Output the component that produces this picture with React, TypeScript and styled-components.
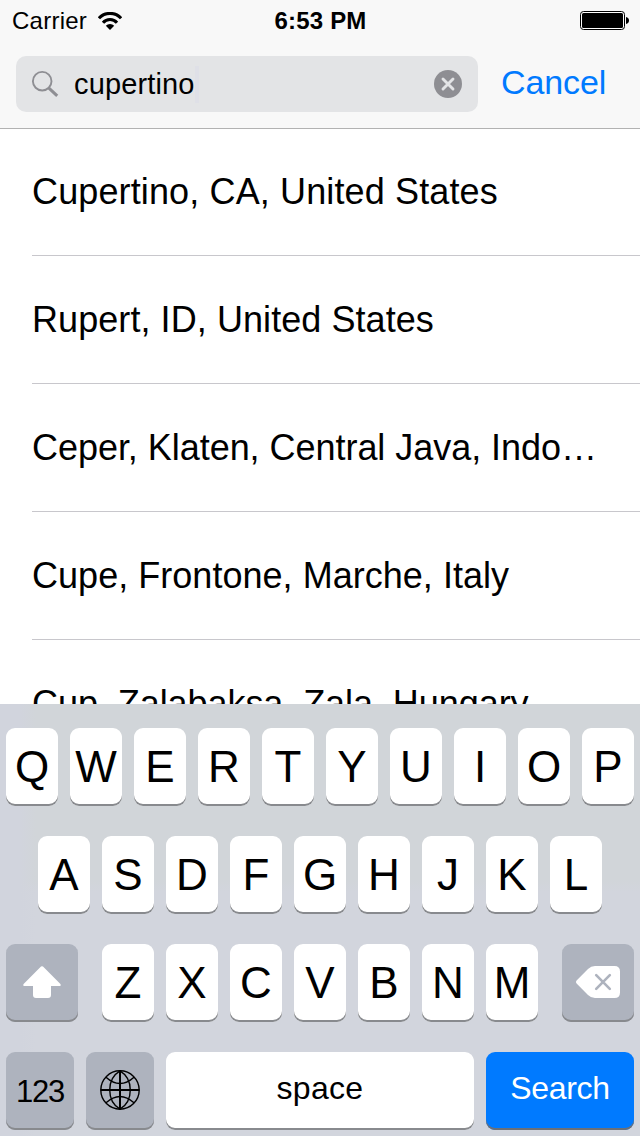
import React from "react";
import styled, { createGlobalStyle } from "styled-components";

const GlobalStyle = createGlobalStyle`
  * { box-sizing: border-box; }
  body {
    margin: 0;
    background: #fff;
    font-family: "Liberation Sans", Arial, sans-serif;
    color: #000;
  }
`;

const Screen = styled.div`
  width: 640px;
  height: 1136px;
  display: flex;
  flex-direction: column;
  overflow: hidden;
  background: #fff;
`;

const Header = styled.header`
  flex: none;
  height: 129px;
  background: #f8f8f8;
  border-bottom: 1px solid #b2b2b2;
`;

const StatusBar = styled.div`
  height: 40px;
  display: grid;
  grid-template-columns: 1fr auto 1fr;
  align-items: center;
  padding: 1px 11px 0 12px;
`;

const Carrier = styled.div`
  display: flex;
  align-items: center;
  gap: 11px;
  font-size: 24px;
  line-height: 28px;
  letter-spacing: 0.25px;
`;

const Clock = styled.div`
  font-size: 24px;
  line-height: 28px;
  font-weight: 700;
  letter-spacing: 0.2px;
`;

const Battery = styled.div`
  display: flex;
  justify-content: flex-end;
`;

const SearchBar = styled.div`
  display: flex;
  align-items: center;
  padding: 16px 0 0 16px;
`;

const SearchField = styled.div`
  flex: none;
  width: 462px;
  height: 56px;
  display: flex;
  align-items: center;
  padding: 0 16px 0 15px;
  border-radius: 10px;
  background: #e3e4e6;
`;

const Query = styled.span`
  margin-left: 15px;
  font-size: 29px;
  line-height: 34px;
  letter-spacing: 0.15px;
`;

const Caret = styled.span`
  width: 4px;
  height: 37px;
  margin-right: auto;
  background: #dfe0e7;
`;

const Cancel = styled.span`
  margin-left: 23px;
  padding-bottom: 4px;
  color: #007aff;
  font-size: 34px;
  line-height: 40px;
  letter-spacing: -0.1px;
  white-space: nowrap;
`;

const Results = styled.div`
  flex: none;
  height: 575px;
  overflow: hidden;
`;

const Result = styled.div<{ $ls: number }>`
  height: 128px;
  margin-left: 32px;
  border-bottom: 1px solid #c8c7cc;
  line-height: 127px;
  font-size: 36px;
  letter-spacing: ${(p) => p.$ls}px;
  white-space: nowrap;
  &:first-child {
    height: 127px;
    line-height: 126px;
  }
`;

const Keyboard = styled.div`
  flex: 1;
  display: flex;
  flex-direction: column;
  gap: 30px;
  padding: 24px 6px 6px;
  background:
    linear-gradient(90deg, #d1d4dd 0, #d1d4dd 20px, rgba(209, 212, 221, 0) 36px),
    linear-gradient(#d1d5d9 0, #d1d5d9 176px, #d2d5dd 188px);
`;

const KeyRow = styled.div`
  display: flex;
  justify-content: center;
  gap: 12px;
`;

type Tone = "light" | "dark" | "blue";
const tones: Record<Tone, { bg: string; fg: string; edge: string }> = {
  light: { bg: "#fff", fg: "#000", edge: "#888a8e" },
  dark: { bg: "#aeb3be", fg: "#000", edge: "#888a8e" },
  blue: { bg: "#007aff", fg: "#fff", edge: "#6c7077" },
};

const Key = styled.div<{ $w?: number; $tone?: Tone; $size?: number; $ls?: number; $lift?: number }>`
  width: ${(p) => p.$w ?? 52}px;
  height: 78px;
  display: flex;
  align-items: center;
  justify-content: center;
  padding-bottom: ${(p) => p.$lift ?? 0}px;
  border-radius: 9px;
  background: ${(p) => tones[p.$tone ?? "light"].bg};
  color: ${(p) => tones[p.$tone ?? "light"].fg};
  box-shadow: inset 0 -2px 0 ${(p) => tones[p.$tone ?? "light"].edge};
  font-size: ${(p) => p.$size ?? 44}px;
  line-height: 1;
  letter-spacing: ${(p) => p.$ls ?? 0}px;
`;

const LetterGroup = styled.div`
  display: flex;
  gap: 12px;
  margin: 0 12px;
`;

const WifiIcon = () => (
  <svg width="24" height="18" viewBox="0 0 24 18">
    <g fill="none" stroke="#000" strokeWidth="3.100">
      <path d="M.9 6.300a15 15 0 0 1 22.200 0" />
      <path d="M5 10.700a9.300 9.300 0 0 1 14 0" />
    </g>
    <path d="M7.800 13.800a5.600 5.600 0 0 1 8.400 0L12 18z" />
  </svg>
);

const BatteryIcon = () => (
  <svg width="49" height="19" viewBox="0 0 49 19">
    <rect x="0.5" y="0.5" width="44" height="18" rx="3" fill="#fff" stroke="#000" />
    <rect x="2" y="2" width="41" height="15" rx="1.500" />
    <path d="M46 6q3 .8 3 3.500T46 13z" />
  </svg>
);

const SearchIcon = () => (
  <svg width="28" height="28" viewBox="0 0 28 28" fill="none" stroke="#8e8e93">
    <circle cx="11.200" cy="11.200" r="9.300" strokeWidth="1.900" />
    <path d="M17.400 17.600l8.800 8.300" strokeWidth="3" />
  </svg>
);

const ClearIcon = () => (
  <svg width="28" height="28" viewBox="0 0 28 28">
    <circle cx="14" cy="14" r="14" fill="#8e8e93" />
    <path d="M9 9l10 10M19 9L9 19" stroke="#e3e4e6" strokeWidth="2.900" strokeLinecap="round" />
  </svg>
);

const ShiftIcon = () => (
  <svg width="38" height="32" viewBox="0 0 38 32" fill="#fff">
    <path d="M18 .6q1-.9 2 0L37.400 18q1.100 2-.8 2H28v9q0 3-3 3H13q-3 0-3-3v-9H1.400q-1.900 0-.8-2z" />
  </svg>
);

const DeleteIcon = () => (
  <svg width="44" height="32" viewBox="0 0 44 32">
    <path d="M.6 14.600L12 3Q15 0 19 0H38.500Q44 0 44 5.500v21Q44 32 38.500 32H19q-4 0-7-3L.6 17.400q-1.200-1.400 0-2.800z" fill="#fff" />
    <path d="M20.200 9.200l13.600 13.600M33.800 9.200L20.200 22.800" stroke="#aeb3be" strokeWidth="2.600" strokeLinecap="round" />
  </svg>
);

const GlobeIcon = () => (
  <svg width="40" height="40" viewBox="0 0 40 40" fill="none" stroke="#000" strokeWidth="1.400">
    <circle cx="20" cy="20" r="19.200" />
    <path d="M20 .7v38.600M.7 20h38.600" strokeWidth="2" />
    <path d="M20 .8C6.300 9 6.300 31 20 39.200M20 .8C33.700 9 33.700 31 20 39.200" />
    <path d="M6 7.300q14 12.600 28 0M6 32.700q14-12.600 28 0" />
  </svg>
);

const places: { name: string; ls: number }[] = [
  { name: "Cupertino, CA, United States", ls: 0.13 },
  { name: "Rupert, ID, United States", ls: 0.07 },
  { name: "Ceper, Klaten, Central Java, Indo…", ls: -0.04 },
  { name: "Cupe, Frontone, Marche, Italy", ls: 0.03 },
  { name: "Cup, Zalabaksa, Zala, Hungary", ls: -0.06 },
];

export default function App() {
  return (
    <Screen>
      <GlobalStyle />
      <Header>
        <StatusBar>
          <Carrier>
            Carrier
            <WifiIcon />
          </Carrier>
          <Clock>6:53 PM</Clock>
          <Battery>
            <BatteryIcon />
          </Battery>
        </StatusBar>
        <SearchBar>
          <SearchField>
            <SearchIcon />
            <Query>cupertino</Query>
            <Caret />
            <ClearIcon />
          </SearchField>
          <Cancel>Cancel</Cancel>
        </SearchBar>
      </Header>
      <Results>
        {places.map((p) => (
          <Result key={p.name} $ls={p.ls}>
            {p.name}
          </Result>
        ))}
      </Results>
      <Keyboard>
        <KeyRow>
          {[..."QWERTYUIOP"].map((c) => (
            <Key key={c}>{c}</Key>
          ))}
        </KeyRow>
        <KeyRow>
          {[..."ASDFGHJKL"].map((c) => (
            <Key key={c}>{c}</Key>
          ))}
        </KeyRow>
        <KeyRow>
          <Key $w={72} $tone="dark" $lift={2}>
            <ShiftIcon />
          </Key>
          <LetterGroup>
            {[..."ZXCVBNM"].map((c) => (
              <Key key={c}>{c}</Key>
            ))}
          </LetterGroup>
          <Key $w={72} $tone="dark" $lift={2}>
            <DeleteIcon />
          </Key>
        </KeyRow>
        <KeyRow>
          <Key $w={68} $tone="dark" $size={31} $ls={-1.2}>123</Key>
          <Key $w={68} $tone="dark" $lift={2}>
            <GlobeIcon />
          </Key>
          <Key $w={308} $size={32} $ls={0.3} $lift={7}>space</Key>
          <Key $w={148} $tone="blue" $size={32} $ls={-0.3} $lift={7}>Search</Key>
        </KeyRow>
      </Keyboard>
    </Screen>
  );
}
